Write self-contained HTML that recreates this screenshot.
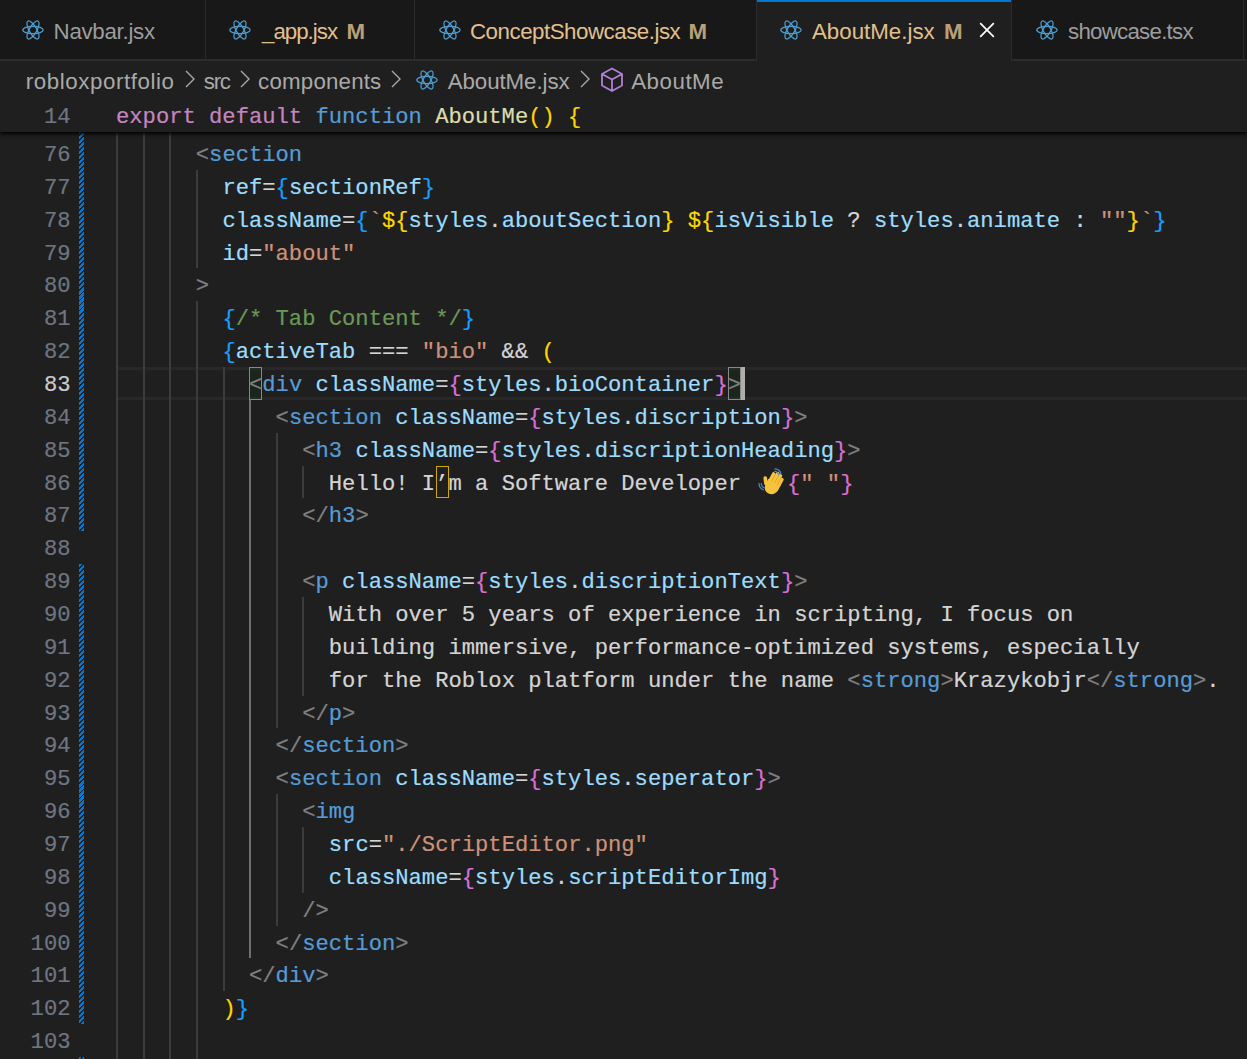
<!DOCTYPE html><html><head><meta charset="utf-8"><style>
html,body{margin:0;padding:0}
body{width:1247px;height:1059px;overflow:hidden;background:#1f1f1f;position:relative;font-family:"Liberation Sans",sans-serif}
.abs{position:absolute}
.code{position:absolute;white-space:pre;padding-top:3px;-webkit-text-stroke:0.2px;font-family:"Liberation Mono",monospace;font-size:22.163px;line-height:32.857px;height:32.857px}
.ln{position:absolute;left:0;padding-top:3px;-webkit-text-stroke:0.2px;width:70.5px;text-align:right;white-space:pre;font-family:"Liberation Mono",monospace;font-size:22.163px;line-height:32.857px;color:#6e7681}
.p{color:#808080}.t{color:#569CD6}.a{color:#9CDCFE}.o{color:#D4D4D4}.s{color:#CE9178}.c{color:#6A9955}
.y{color:#FFD700}.k{color:#DA70D6}.b{color:#179FFF}.kw{color:#C586C0}.fn{color:#DCDCAA}.st{color:#569CD6}
.g{position:absolute;width:2px;background:#3c3c3c}
.tab{position:absolute;top:0;height:59px;background:#181818}
.tabtxt{position:absolute;white-space:pre;font-size:22.3px;line-height:30px;top:16.8px}
.bc{position:absolute;white-space:pre;font-size:22.3px;line-height:30px;color:#a9a9a9;top:67px}
.gut{position:absolute;left:79px;width:5px;background-image:repeating-linear-gradient(-45deg,#0078d4 0px,#0078d4 2.2px,#1f1f1f 2.2px,#1f1f1f 3.55px)}
</style></head><body>

<div class="abs" style="left:116px;top:367.00px;width:1131px;height:32.86px;box-sizing:border-box;border-top:3px solid #282828;border-bottom:3px solid #282828"></div>
<div class="gut" style="top:131.60px;height:399.68px"></div>
<div class="gut" style="top:564.14px;height:460.00px"></div>
<div class="gut" style="top:1057.00px;height:32.86px"></div>
<div class="g" style="left:116.20px;top:131.60px;height:5.40px;background:#3c3c3c"></div>
<div class="g" style="left:142.80px;top:131.60px;height:5.40px;background:#3c3c3c"></div>
<div class="g" style="left:169.40px;top:131.60px;height:5.40px;background:#3c3c3c"></div>
<div class="g" style="left:116.20px;top:137.00px;height:32.86px;background:#3c3c3c"></div>
<div class="g" style="left:142.80px;top:137.00px;height:32.86px;background:#3c3c3c"></div>
<div class="g" style="left:169.40px;top:137.00px;height:32.86px;background:#3c3c3c"></div>
<div class="g" style="left:116.20px;top:169.86px;height:32.86px;background:#3c3c3c"></div>
<div class="g" style="left:142.80px;top:169.86px;height:32.86px;background:#3c3c3c"></div>
<div class="g" style="left:169.40px;top:169.86px;height:32.86px;background:#3c3c3c"></div>
<div class="g" style="left:196.00px;top:169.86px;height:32.86px;background:#3c3c3c"></div>
<div class="g" style="left:116.20px;top:202.72px;height:32.86px;background:#3c3c3c"></div>
<div class="g" style="left:142.80px;top:202.72px;height:32.86px;background:#3c3c3c"></div>
<div class="g" style="left:169.40px;top:202.72px;height:32.86px;background:#3c3c3c"></div>
<div class="g" style="left:196.00px;top:202.72px;height:32.86px;background:#3c3c3c"></div>
<div class="g" style="left:116.20px;top:235.57px;height:32.86px;background:#3c3c3c"></div>
<div class="g" style="left:142.80px;top:235.57px;height:32.86px;background:#3c3c3c"></div>
<div class="g" style="left:169.40px;top:235.57px;height:32.86px;background:#3c3c3c"></div>
<div class="g" style="left:196.00px;top:235.57px;height:32.86px;background:#3c3c3c"></div>
<div class="g" style="left:116.20px;top:268.43px;height:32.86px;background:#3c3c3c"></div>
<div class="g" style="left:142.80px;top:268.43px;height:32.86px;background:#3c3c3c"></div>
<div class="g" style="left:169.40px;top:268.43px;height:32.86px;background:#3c3c3c"></div>
<div class="g" style="left:116.20px;top:301.29px;height:32.86px;background:#3c3c3c"></div>
<div class="g" style="left:142.80px;top:301.29px;height:32.86px;background:#3c3c3c"></div>
<div class="g" style="left:169.40px;top:301.29px;height:32.86px;background:#3c3c3c"></div>
<div class="g" style="left:196.00px;top:301.29px;height:32.86px;background:#3c3c3c"></div>
<div class="g" style="left:116.20px;top:334.14px;height:32.86px;background:#3c3c3c"></div>
<div class="g" style="left:142.80px;top:334.14px;height:32.86px;background:#3c3c3c"></div>
<div class="g" style="left:169.40px;top:334.14px;height:32.86px;background:#3c3c3c"></div>
<div class="g" style="left:196.00px;top:334.14px;height:32.86px;background:#3c3c3c"></div>
<div class="g" style="left:116.20px;top:367.00px;height:32.86px;background:#3c3c3c"></div>
<div class="g" style="left:142.80px;top:367.00px;height:32.86px;background:#3c3c3c"></div>
<div class="g" style="left:169.40px;top:367.00px;height:32.86px;background:#3c3c3c"></div>
<div class="g" style="left:196.00px;top:367.00px;height:32.86px;background:#3c3c3c"></div>
<div class="g" style="left:222.60px;top:367.00px;height:32.86px;background:#3c3c3c"></div>
<div class="g" style="left:116.20px;top:399.86px;height:32.86px;background:#3c3c3c"></div>
<div class="g" style="left:142.80px;top:399.86px;height:32.86px;background:#3c3c3c"></div>
<div class="g" style="left:169.40px;top:399.86px;height:32.86px;background:#3c3c3c"></div>
<div class="g" style="left:196.00px;top:399.86px;height:32.86px;background:#3c3c3c"></div>
<div class="g" style="left:222.60px;top:399.86px;height:32.86px;background:#3c3c3c"></div>
<div class="g" style="left:249.20px;top:399.86px;height:32.86px;background:#707070"></div>
<div class="g" style="left:116.20px;top:432.71px;height:32.86px;background:#3c3c3c"></div>
<div class="g" style="left:142.80px;top:432.71px;height:32.86px;background:#3c3c3c"></div>
<div class="g" style="left:169.40px;top:432.71px;height:32.86px;background:#3c3c3c"></div>
<div class="g" style="left:196.00px;top:432.71px;height:32.86px;background:#3c3c3c"></div>
<div class="g" style="left:222.60px;top:432.71px;height:32.86px;background:#3c3c3c"></div>
<div class="g" style="left:249.20px;top:432.71px;height:32.86px;background:#707070"></div>
<div class="g" style="left:275.80px;top:432.71px;height:32.86px;background:#3c3c3c"></div>
<div class="g" style="left:116.20px;top:465.57px;height:32.86px;background:#3c3c3c"></div>
<div class="g" style="left:142.80px;top:465.57px;height:32.86px;background:#3c3c3c"></div>
<div class="g" style="left:169.40px;top:465.57px;height:32.86px;background:#3c3c3c"></div>
<div class="g" style="left:196.00px;top:465.57px;height:32.86px;background:#3c3c3c"></div>
<div class="g" style="left:222.60px;top:465.57px;height:32.86px;background:#3c3c3c"></div>
<div class="g" style="left:249.20px;top:465.57px;height:32.86px;background:#707070"></div>
<div class="g" style="left:275.80px;top:465.57px;height:32.86px;background:#3c3c3c"></div>
<div class="g" style="left:302.40px;top:465.57px;height:32.86px;background:#3c3c3c"></div>
<div class="g" style="left:116.20px;top:498.43px;height:32.86px;background:#3c3c3c"></div>
<div class="g" style="left:142.80px;top:498.43px;height:32.86px;background:#3c3c3c"></div>
<div class="g" style="left:169.40px;top:498.43px;height:32.86px;background:#3c3c3c"></div>
<div class="g" style="left:196.00px;top:498.43px;height:32.86px;background:#3c3c3c"></div>
<div class="g" style="left:222.60px;top:498.43px;height:32.86px;background:#3c3c3c"></div>
<div class="g" style="left:249.20px;top:498.43px;height:32.86px;background:#707070"></div>
<div class="g" style="left:275.80px;top:498.43px;height:32.86px;background:#3c3c3c"></div>
<div class="g" style="left:116.20px;top:531.28px;height:32.86px;background:#3c3c3c"></div>
<div class="g" style="left:142.80px;top:531.28px;height:32.86px;background:#3c3c3c"></div>
<div class="g" style="left:169.40px;top:531.28px;height:32.86px;background:#3c3c3c"></div>
<div class="g" style="left:196.00px;top:531.28px;height:32.86px;background:#3c3c3c"></div>
<div class="g" style="left:222.60px;top:531.28px;height:32.86px;background:#3c3c3c"></div>
<div class="g" style="left:249.20px;top:531.28px;height:32.86px;background:#707070"></div>
<div class="g" style="left:275.80px;top:531.28px;height:32.86px;background:#3c3c3c"></div>
<div class="g" style="left:116.20px;top:564.14px;height:32.86px;background:#3c3c3c"></div>
<div class="g" style="left:142.80px;top:564.14px;height:32.86px;background:#3c3c3c"></div>
<div class="g" style="left:169.40px;top:564.14px;height:32.86px;background:#3c3c3c"></div>
<div class="g" style="left:196.00px;top:564.14px;height:32.86px;background:#3c3c3c"></div>
<div class="g" style="left:222.60px;top:564.14px;height:32.86px;background:#3c3c3c"></div>
<div class="g" style="left:249.20px;top:564.14px;height:32.86px;background:#707070"></div>
<div class="g" style="left:275.80px;top:564.14px;height:32.86px;background:#3c3c3c"></div>
<div class="g" style="left:116.20px;top:597.00px;height:32.86px;background:#3c3c3c"></div>
<div class="g" style="left:142.80px;top:597.00px;height:32.86px;background:#3c3c3c"></div>
<div class="g" style="left:169.40px;top:597.00px;height:32.86px;background:#3c3c3c"></div>
<div class="g" style="left:196.00px;top:597.00px;height:32.86px;background:#3c3c3c"></div>
<div class="g" style="left:222.60px;top:597.00px;height:32.86px;background:#3c3c3c"></div>
<div class="g" style="left:249.20px;top:597.00px;height:32.86px;background:#707070"></div>
<div class="g" style="left:275.80px;top:597.00px;height:32.86px;background:#3c3c3c"></div>
<div class="g" style="left:302.40px;top:597.00px;height:32.86px;background:#3c3c3c"></div>
<div class="g" style="left:116.20px;top:629.86px;height:32.86px;background:#3c3c3c"></div>
<div class="g" style="left:142.80px;top:629.86px;height:32.86px;background:#3c3c3c"></div>
<div class="g" style="left:169.40px;top:629.86px;height:32.86px;background:#3c3c3c"></div>
<div class="g" style="left:196.00px;top:629.86px;height:32.86px;background:#3c3c3c"></div>
<div class="g" style="left:222.60px;top:629.86px;height:32.86px;background:#3c3c3c"></div>
<div class="g" style="left:249.20px;top:629.86px;height:32.86px;background:#707070"></div>
<div class="g" style="left:275.80px;top:629.86px;height:32.86px;background:#3c3c3c"></div>
<div class="g" style="left:302.40px;top:629.86px;height:32.86px;background:#3c3c3c"></div>
<div class="g" style="left:116.20px;top:662.71px;height:32.86px;background:#3c3c3c"></div>
<div class="g" style="left:142.80px;top:662.71px;height:32.86px;background:#3c3c3c"></div>
<div class="g" style="left:169.40px;top:662.71px;height:32.86px;background:#3c3c3c"></div>
<div class="g" style="left:196.00px;top:662.71px;height:32.86px;background:#3c3c3c"></div>
<div class="g" style="left:222.60px;top:662.71px;height:32.86px;background:#3c3c3c"></div>
<div class="g" style="left:249.20px;top:662.71px;height:32.86px;background:#707070"></div>
<div class="g" style="left:275.80px;top:662.71px;height:32.86px;background:#3c3c3c"></div>
<div class="g" style="left:302.40px;top:662.71px;height:32.86px;background:#3c3c3c"></div>
<div class="g" style="left:116.20px;top:695.57px;height:32.86px;background:#3c3c3c"></div>
<div class="g" style="left:142.80px;top:695.57px;height:32.86px;background:#3c3c3c"></div>
<div class="g" style="left:169.40px;top:695.57px;height:32.86px;background:#3c3c3c"></div>
<div class="g" style="left:196.00px;top:695.57px;height:32.86px;background:#3c3c3c"></div>
<div class="g" style="left:222.60px;top:695.57px;height:32.86px;background:#3c3c3c"></div>
<div class="g" style="left:249.20px;top:695.57px;height:32.86px;background:#707070"></div>
<div class="g" style="left:275.80px;top:695.57px;height:32.86px;background:#3c3c3c"></div>
<div class="g" style="left:116.20px;top:728.43px;height:32.86px;background:#3c3c3c"></div>
<div class="g" style="left:142.80px;top:728.43px;height:32.86px;background:#3c3c3c"></div>
<div class="g" style="left:169.40px;top:728.43px;height:32.86px;background:#3c3c3c"></div>
<div class="g" style="left:196.00px;top:728.43px;height:32.86px;background:#3c3c3c"></div>
<div class="g" style="left:222.60px;top:728.43px;height:32.86px;background:#3c3c3c"></div>
<div class="g" style="left:249.20px;top:728.43px;height:32.86px;background:#707070"></div>
<div class="g" style="left:116.20px;top:761.28px;height:32.86px;background:#3c3c3c"></div>
<div class="g" style="left:142.80px;top:761.28px;height:32.86px;background:#3c3c3c"></div>
<div class="g" style="left:169.40px;top:761.28px;height:32.86px;background:#3c3c3c"></div>
<div class="g" style="left:196.00px;top:761.28px;height:32.86px;background:#3c3c3c"></div>
<div class="g" style="left:222.60px;top:761.28px;height:32.86px;background:#3c3c3c"></div>
<div class="g" style="left:249.20px;top:761.28px;height:32.86px;background:#707070"></div>
<div class="g" style="left:116.20px;top:794.14px;height:32.86px;background:#3c3c3c"></div>
<div class="g" style="left:142.80px;top:794.14px;height:32.86px;background:#3c3c3c"></div>
<div class="g" style="left:169.40px;top:794.14px;height:32.86px;background:#3c3c3c"></div>
<div class="g" style="left:196.00px;top:794.14px;height:32.86px;background:#3c3c3c"></div>
<div class="g" style="left:222.60px;top:794.14px;height:32.86px;background:#3c3c3c"></div>
<div class="g" style="left:249.20px;top:794.14px;height:32.86px;background:#707070"></div>
<div class="g" style="left:275.80px;top:794.14px;height:32.86px;background:#3c3c3c"></div>
<div class="g" style="left:116.20px;top:827.00px;height:32.86px;background:#3c3c3c"></div>
<div class="g" style="left:142.80px;top:827.00px;height:32.86px;background:#3c3c3c"></div>
<div class="g" style="left:169.40px;top:827.00px;height:32.86px;background:#3c3c3c"></div>
<div class="g" style="left:196.00px;top:827.00px;height:32.86px;background:#3c3c3c"></div>
<div class="g" style="left:222.60px;top:827.00px;height:32.86px;background:#3c3c3c"></div>
<div class="g" style="left:249.20px;top:827.00px;height:32.86px;background:#707070"></div>
<div class="g" style="left:275.80px;top:827.00px;height:32.86px;background:#3c3c3c"></div>
<div class="g" style="left:302.40px;top:827.00px;height:32.86px;background:#3c3c3c"></div>
<div class="g" style="left:116.20px;top:859.86px;height:32.86px;background:#3c3c3c"></div>
<div class="g" style="left:142.80px;top:859.86px;height:32.86px;background:#3c3c3c"></div>
<div class="g" style="left:169.40px;top:859.86px;height:32.86px;background:#3c3c3c"></div>
<div class="g" style="left:196.00px;top:859.86px;height:32.86px;background:#3c3c3c"></div>
<div class="g" style="left:222.60px;top:859.86px;height:32.86px;background:#3c3c3c"></div>
<div class="g" style="left:249.20px;top:859.86px;height:32.86px;background:#707070"></div>
<div class="g" style="left:275.80px;top:859.86px;height:32.86px;background:#3c3c3c"></div>
<div class="g" style="left:302.40px;top:859.86px;height:32.86px;background:#3c3c3c"></div>
<div class="g" style="left:116.20px;top:892.71px;height:32.86px;background:#3c3c3c"></div>
<div class="g" style="left:142.80px;top:892.71px;height:32.86px;background:#3c3c3c"></div>
<div class="g" style="left:169.40px;top:892.71px;height:32.86px;background:#3c3c3c"></div>
<div class="g" style="left:196.00px;top:892.71px;height:32.86px;background:#3c3c3c"></div>
<div class="g" style="left:222.60px;top:892.71px;height:32.86px;background:#3c3c3c"></div>
<div class="g" style="left:249.20px;top:892.71px;height:32.86px;background:#707070"></div>
<div class="g" style="left:275.80px;top:892.71px;height:32.86px;background:#3c3c3c"></div>
<div class="g" style="left:116.20px;top:925.57px;height:32.86px;background:#3c3c3c"></div>
<div class="g" style="left:142.80px;top:925.57px;height:32.86px;background:#3c3c3c"></div>
<div class="g" style="left:169.40px;top:925.57px;height:32.86px;background:#3c3c3c"></div>
<div class="g" style="left:196.00px;top:925.57px;height:32.86px;background:#3c3c3c"></div>
<div class="g" style="left:222.60px;top:925.57px;height:32.86px;background:#3c3c3c"></div>
<div class="g" style="left:249.20px;top:925.57px;height:32.86px;background:#707070"></div>
<div class="g" style="left:116.20px;top:958.43px;height:32.86px;background:#3c3c3c"></div>
<div class="g" style="left:142.80px;top:958.43px;height:32.86px;background:#3c3c3c"></div>
<div class="g" style="left:169.40px;top:958.43px;height:32.86px;background:#3c3c3c"></div>
<div class="g" style="left:196.00px;top:958.43px;height:32.86px;background:#3c3c3c"></div>
<div class="g" style="left:222.60px;top:958.43px;height:32.86px;background:#3c3c3c"></div>
<div class="g" style="left:116.20px;top:991.28px;height:32.86px;background:#3c3c3c"></div>
<div class="g" style="left:142.80px;top:991.28px;height:32.86px;background:#3c3c3c"></div>
<div class="g" style="left:169.40px;top:991.28px;height:32.86px;background:#3c3c3c"></div>
<div class="g" style="left:196.00px;top:991.28px;height:32.86px;background:#3c3c3c"></div>
<div class="g" style="left:116.20px;top:1024.14px;height:32.86px;background:#3c3c3c"></div>
<div class="g" style="left:142.80px;top:1024.14px;height:32.86px;background:#3c3c3c"></div>
<div class="g" style="left:169.40px;top:1024.14px;height:32.86px;background:#3c3c3c"></div>
<div class="g" style="left:196.00px;top:1024.14px;height:32.86px;background:#3c3c3c"></div>
<div class="g" style="left:116.20px;top:1057.00px;height:32.86px;background:#3c3c3c"></div>
<div class="g" style="left:142.80px;top:1057.00px;height:32.86px;background:#3c3c3c"></div>
<div class="g" style="left:169.40px;top:1057.00px;height:32.86px;background:#3c3c3c"></div>
<div class="g" style="left:196.00px;top:1057.00px;height:32.86px;background:#3c3c3c"></div>
<div class="abs" style="left:249.00px;top:367.00px;width:13.30px;height:32.86px;box-sizing:border-box;border:1px solid #888888;background:rgba(0,100,0,0.1)"></div>
<div class="abs" style="left:727.80px;top:367.00px;width:13.30px;height:32.86px;box-sizing:border-box;border:1px solid #888888;background:rgba(0,100,0,0.1)"></div>
<div class="abs" style="left:741.10px;top:367.00px;width:3.5px;height:32.86px;background:#aeafad"></div>
<div class="abs" style="left:436.00px;top:465.57px;width:13.30px;height:32.86px;box-sizing:border-box;border:1.5px solid #cca700"></div>
<div class="ln" style="top:137.00px;color:#6e7681">76</div>
<div class="code" style="left:195.80px;top:137.00px"><span class="p">&lt;</span><span class="t">section</span></div>
<div class="ln" style="top:169.86px;color:#6e7681">77</div>
<div class="code" style="left:222.40px;top:169.86px"><span class="a">ref</span><span class="o">=</span><span class="b">{</span><span class="a">sectionRef</span><span class="b">}</span></div>
<div class="ln" style="top:202.72px;color:#6e7681">78</div>
<div class="code" style="left:222.40px;top:202.72px"><span class="a">className</span><span class="o">=</span><span class="b">{</span><span class="s">`</span><span class="y">${</span><span class="a">styles</span><span class="o">.</span><span class="a">aboutSection</span><span class="y">}</span><span class="o"> </span><span class="y">${</span><span class="a">isVisible</span><span class="o"> ? </span><span class="a">styles</span><span class="o">.</span><span class="a">animate</span><span class="o"> : </span><span class="s">""</span><span class="y">}</span><span class="s">`</span><span class="b">}</span></div>
<div class="ln" style="top:235.57px;color:#6e7681">79</div>
<div class="code" style="left:222.40px;top:235.57px"><span class="a">id</span><span class="o">=</span><span class="s">"about"</span></div>
<div class="ln" style="top:268.43px;color:#6e7681">80</div>
<div class="code" style="left:195.80px;top:268.43px"><span class="p">&gt;</span></div>
<div class="ln" style="top:301.29px;color:#6e7681">81</div>
<div class="code" style="left:222.40px;top:301.29px"><span class="b">{</span><span class="c">/* Tab Content */</span><span class="b">}</span></div>
<div class="ln" style="top:334.14px;color:#6e7681">82</div>
<div class="code" style="left:222.40px;top:334.14px"><span class="b">{</span><span class="a">activeTab</span><span class="o"> === </span><span class="s">"bio"</span><span class="o"> &amp;&amp; </span><span class="y">(</span></div>
<div class="ln" style="top:367.00px;color:#cccccc">83</div>
<div class="code" style="left:249.00px;top:367.00px"><span class="p">&lt;</span><span class="t">div</span><span class="o"> </span><span class="a">className</span><span class="o">=</span><span class="k">{</span><span class="a">styles</span><span class="o">.</span><span class="a">bioContainer</span><span class="k">}</span><span class="p">&gt;</span></div>
<div class="ln" style="top:399.86px;color:#6e7681">84</div>
<div class="code" style="left:275.60px;top:399.86px"><span class="p">&lt;</span><span class="t">section</span><span class="o"> </span><span class="a">className</span><span class="o">=</span><span class="k">{</span><span class="a">styles</span><span class="o">.</span><span class="a">discription</span><span class="k">}</span><span class="p">&gt;</span></div>
<div class="ln" style="top:432.71px;color:#6e7681">85</div>
<div class="code" style="left:302.20px;top:432.71px"><span class="p">&lt;</span><span class="t">h3</span><span class="o"> </span><span class="a">className</span><span class="o">=</span><span class="k">{</span><span class="a">styles</span><span class="o">.</span><span class="a">discriptionHeading</span><span class="k">}</span><span class="p">&gt;</span></div>
<div class="ln" style="top:465.57px;color:#6e7681">86</div>
<div class="code" style="left:328.80px;top:465.57px"><span class="o">Hello! I’m a Software Developer </span></div>
<div class="ln" style="top:498.43px;color:#6e7681">87</div>
<div class="code" style="left:302.20px;top:498.43px"><span class="p">&lt;/</span><span class="t">h3</span><span class="p">&gt;</span></div>
<div class="ln" style="top:531.28px;color:#6e7681">88</div>
<div class="ln" style="top:564.14px;color:#6e7681">89</div>
<div class="code" style="left:302.20px;top:564.14px"><span class="p">&lt;</span><span class="t">p</span><span class="o"> </span><span class="a">className</span><span class="o">=</span><span class="k">{</span><span class="a">styles</span><span class="o">.</span><span class="a">discriptionText</span><span class="k">}</span><span class="p">&gt;</span></div>
<div class="ln" style="top:597.00px;color:#6e7681">90</div>
<div class="code" style="left:328.80px;top:597.00px"><span class="o">With over 5 years of experience in scripting, I focus on</span></div>
<div class="ln" style="top:629.86px;color:#6e7681">91</div>
<div class="code" style="left:328.80px;top:629.86px"><span class="o">building immersive, performance-optimized systems, especially</span></div>
<div class="ln" style="top:662.71px;color:#6e7681">92</div>
<div class="code" style="left:328.80px;top:662.71px"><span class="o">for the Roblox platform under the name </span><span class="p">&lt;</span><span class="t">strong</span><span class="p">&gt;</span><span class="o">Krazykobjr</span><span class="p">&lt;/</span><span class="t">strong</span><span class="p">&gt;</span><span class="o">.</span></div>
<div class="ln" style="top:695.57px;color:#6e7681">93</div>
<div class="code" style="left:302.20px;top:695.57px"><span class="p">&lt;/</span><span class="t">p</span><span class="p">&gt;</span></div>
<div class="ln" style="top:728.43px;color:#6e7681">94</div>
<div class="code" style="left:275.60px;top:728.43px"><span class="p">&lt;/</span><span class="t">section</span><span class="p">&gt;</span></div>
<div class="ln" style="top:761.28px;color:#6e7681">95</div>
<div class="code" style="left:275.60px;top:761.28px"><span class="p">&lt;</span><span class="t">section</span><span class="o"> </span><span class="a">className</span><span class="o">=</span><span class="k">{</span><span class="a">styles</span><span class="o">.</span><span class="a">seperator</span><span class="k">}</span><span class="p">&gt;</span></div>
<div class="ln" style="top:794.14px;color:#6e7681">96</div>
<div class="code" style="left:302.20px;top:794.14px"><span class="p">&lt;</span><span class="t">img</span></div>
<div class="ln" style="top:827.00px;color:#6e7681">97</div>
<div class="code" style="left:328.80px;top:827.00px"><span class="a">src</span><span class="o">=</span><span class="s">"./ScriptEditor.png"</span></div>
<div class="ln" style="top:859.86px;color:#6e7681">98</div>
<div class="code" style="left:328.80px;top:859.86px"><span class="a">className</span><span class="o">=</span><span class="k">{</span><span class="a">styles</span><span class="o">.</span><span class="a">scriptEditorImg</span><span class="k">}</span></div>
<div class="ln" style="top:892.71px;color:#6e7681">99</div>
<div class="code" style="left:302.20px;top:892.71px"><span class="p">/&gt;</span></div>
<div class="ln" style="top:925.57px;color:#6e7681">100</div>
<div class="code" style="left:275.60px;top:925.57px"><span class="p">&lt;/</span><span class="t">section</span><span class="p">&gt;</span></div>
<div class="ln" style="top:958.43px;color:#6e7681">101</div>
<div class="code" style="left:249.00px;top:958.43px"><span class="p">&lt;/</span><span class="t">div</span><span class="p">&gt;</span></div>
<div class="ln" style="top:991.28px;color:#6e7681">102</div>
<div class="code" style="left:222.40px;top:991.28px"><span class="y">)</span><span class="b">}</span></div>
<div class="ln" style="top:1024.14px;color:#6e7681">103</div>
<svg class="abs" style="left:758px;top:468px" width="27" height="27" viewBox="0 0 27 27"><g fill="#f8c33c" transform="rotate(28 16 16)"><rect x="9.2" y="5.5" width="3.6" height="12" rx="1.8"/><rect x="12.6" y="3.2" width="3.6" height="13" rx="1.8"/><rect x="16" y="4" width="3.6" height="12" rx="1.8"/><rect x="19.3" y="6.5" width="3.3" height="10" rx="1.65"/><rect x="5.2" y="12.5" width="3.6" height="9" rx="1.8" transform="rotate(-35 7 17)"/><path d="M8.6 14 H22.6 V19 C22.6 24 19 27 15.2 27 C11 27 8.6 23.5 8.6 19Z"/><path d="M12.7 8 V15 M16.1 6 V15 M19.4 8 V15.5" stroke="#e0a020" stroke-width="0.6" fill="none"/></g><g fill="none" stroke="#4a8fe0" stroke-width="1.1" stroke-linecap="round"><path d="M16.5 3.2 C18.5 3.3 20 4.6 20.6 6.6"/><path d="M17 0.9 C20 1 22.3 3 22.9 5.8"/><path d="M3.2 15.5 C3.3 17.5 4.5 19 6.2 19.8"/><path d="M1 15.2 C1 18.2 2.8 20.8 5.5 21.8"/></g></svg>
<div class="code" style="left:786.99px;top:465.57px"><span class="k">{</span><span class="s">" "</span><span class="k">}</span></div>
<div class="abs" style="left:0;top:98.7px;width:1247px;height:32.9px;background:#1f1f1f;box-shadow:0 2px 4px 0 #000"></div>
<div class="ln" style="top:98.7px">14</div>
<div class="code" style="left:116.00px;top:98.7px"><span class="kw">export</span><span class="o"> </span><span class="kw">default</span><span class="o"> </span><span class="st">function</span><span class="o"> </span><span class="fn">AboutMe</span><span class="y">()</span><span class="o"> </span><span class="y">{</span></div>
<div class="abs" style="left:0;top:61px;width:1247px;height:37.7px;background:#1f1f1f"></div>
<div class="bc" style="left:25.7px;letter-spacing:0.59px">robloxportfolio</div>
<svg class="abs" style="left:185.3px;top:70px" width="10" height="18" viewBox="0 0 10 18"><path d="M1 1L9 9L1 17" fill="none" stroke="#a9a9a9" stroke-width="1.4"/></svg>
<div class="bc" style="left:203.7px;letter-spacing:-1.2px">src</div>
<svg class="abs" style="left:240px;top:70px" width="10" height="18" viewBox="0 0 10 18"><path d="M1 1L9 9L1 17" fill="none" stroke="#a9a9a9" stroke-width="1.4"/></svg>
<div class="bc" style="left:258.1px;letter-spacing:0.19px">components</div>
<svg class="abs" style="left:391px;top:70px" width="10" height="18" viewBox="0 0 10 18"><path d="M1 1L9 9L1 17" fill="none" stroke="#a9a9a9" stroke-width="1.4"/></svg>
<svg class="abs" style="left:415.8px;top:70px" width="22" height="20" viewBox="-11 -10 22 20"><g fill="none" stroke="#4f9fd2" stroke-width="1.2"><ellipse rx="10.2" ry="3.7"/><ellipse rx="10.2" ry="3.7" transform="rotate(60)"/><ellipse rx="10.2" ry="3.7" transform="rotate(-60)"/></g></svg>
<div class="bc" style="left:447.7px;letter-spacing:-0.07px">AboutMe.jsx</div>
<svg class="abs" style="left:579.5px;top:70px" width="10" height="18" viewBox="0 0 10 18"><path d="M1 1L9 9L1 17" fill="none" stroke="#a9a9a9" stroke-width="1.4"/></svg>
<svg class="abs" style="left:600px;top:67px" width="24" height="26" viewBox="0 0 24 26"><path d="M12 1.5L22 7V18.5L12 24L2 18.5V7Z M2 7L12 12.5L22 7 M12 12.5V24" fill="none" stroke="#b180d7" stroke-width="1.8" stroke-linejoin="round"/></svg>
<div class="bc" style="left:631.2px;letter-spacing:0.53px">AboutMe</div>
<div class="abs" style="left:0;top:0;width:1247px;height:59px;background:#181818"></div>
<div class="abs" style="left:0;top:59px;width:1247px;height:2px;background:#2b2b2b"></div>
<div class="abs" style="left:205px;top:0;width:1px;height:59px;background:#2b2b2b"></div>
<div class="abs" style="left:414px;top:0;width:1px;height:59px;background:#2b2b2b"></div>
<div class="abs" style="left:756px;top:0;width:1px;height:59px;background:#2b2b2b"></div>
<div class="abs" style="left:1011px;top:0;width:1px;height:59px;background:#2b2b2b"></div>
<div class="abs" style="left:1243px;top:0;width:1px;height:59px;background:#2b2b2b"></div>
<div class="abs" style="left:757px;top:0;width:254px;height:61px;background:#1f1f1f"></div>
<div class="abs" style="left:757px;top:0;width:254px;height:2px;background:#0078d4"></div>
<svg class="abs" style="left:21.5px;top:20px" width="22" height="20" viewBox="-11 -10 22 20"><g fill="none" stroke="#4f9fd2" stroke-width="1.2"><ellipse rx="10.2" ry="3.7"/><ellipse rx="10.2" ry="3.7" transform="rotate(60)"/><ellipse rx="10.2" ry="3.7" transform="rotate(-60)"/></g></svg>
<div class="tabtxt" style="left:53.6px;letter-spacing:-0.29px;color:#9d9d9d">Navbar.jsx</div>
<svg class="abs" style="left:229px;top:20px" width="22" height="20" viewBox="-11 -10 22 20"><g fill="none" stroke="#4f9fd2" stroke-width="1.2"><ellipse rx="10.2" ry="3.7"/><ellipse rx="10.2" ry="3.7" transform="rotate(60)"/><ellipse rx="10.2" ry="3.7" transform="rotate(-60)"/></g></svg>
<div class="tabtxt" style="left:262px;letter-spacing:-1px;color:#e2c08d">_app.jsx</div>
<div class="tabtxt" style="left:346.4px;color:#bba077;font-weight:bold">M</div>
<svg class="abs" style="left:438.5px;top:20px" width="22" height="20" viewBox="-11 -10 22 20"><g fill="none" stroke="#4f9fd2" stroke-width="1.2"><ellipse rx="10.2" ry="3.7"/><ellipse rx="10.2" ry="3.7" transform="rotate(60)"/><ellipse rx="10.2" ry="3.7" transform="rotate(-60)"/></g></svg>
<div class="tabtxt" style="left:470px;letter-spacing:-0.48px;color:#e2c08d">ConceptShowcase.jsx</div>
<div class="tabtxt" style="left:688.4px;color:#bba077;font-weight:bold">M</div>
<svg class="abs" style="left:780.2px;top:19.8px" width="22" height="20" viewBox="-11 -10 22 20"><g fill="none" stroke="#4f9fd2" stroke-width="1.2"><ellipse rx="10.2" ry="3.7"/><ellipse rx="10.2" ry="3.7" transform="rotate(60)"/><ellipse rx="10.2" ry="3.7" transform="rotate(-60)"/></g></svg>
<div class="tabtxt" style="left:812px;color:#e2c08d">AboutMe.jsx</div>
<div class="tabtxt" style="left:944px;color:#bba077;font-weight:bold">M</div>
<svg class="abs" style="left:979px;top:22px" width="16" height="16" viewBox="0 0 16 16"><path d="M1.2 1.2L14.8 14.8M14.8 1.2L1.2 14.8" stroke="#ffffff" stroke-width="1.7"/></svg>
<svg class="abs" style="left:1035.7px;top:20px" width="22" height="20" viewBox="-11 -10 22 20"><g fill="none" stroke="#4f9fd2" stroke-width="1.2"><ellipse rx="10.2" ry="3.7"/><ellipse rx="10.2" ry="3.7" transform="rotate(60)"/><ellipse rx="10.2" ry="3.7" transform="rotate(-60)"/></g></svg>
<div class="tabtxt" style="left:1068px;letter-spacing:-0.75px;color:#9d9d9d">showcase.tsx</div>
</body></html>
